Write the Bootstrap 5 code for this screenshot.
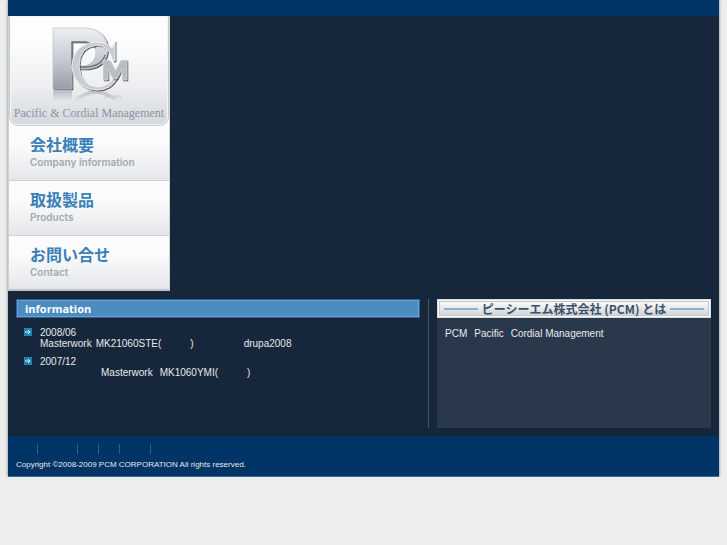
<!DOCTYPE html>
<html lang="ja">
<head>
<meta charset="utf-8">
<meta name="viewport" content="width=device-width, initial-scale=1">
<title>Pacific &amp; Cordial Management</title>
<link href="https://cdn.jsdelivr.net/npm/bootstrap@5.3.0/dist/css/bootstrap.min.css" rel="stylesheet">
<style>
body{background:#eceeed;font:10px/11px "Liberation Sans","Noto Sans CJK JP",sans-serif;color:#e6eaee}
.page-shell{margin:0 8px;background:#16263b;box-shadow:0 0 3px #777}
.top-strip{height:16px;background:#003366}
.side{width:162px;background:#fff;border:solid #d0d3d6;border-width:0 1px}
.brand-link{height:110px;border-radius:0 0 9px 9px;border:1px solid #c9ccd1;border-top:0;background:linear-gradient(#fdfdfd 25%,#eceef0 65%,#d3d7de);box-shadow:inset 0 0 0 1px #f4f5f6;text-decoration:none}
.brand-link svg{width:100%;height:108px}
.side-link{height:55px;padding:6px 0 0 21px;text-decoration:none;color:#a4a8ad;background:linear-gradient(#fcfcfc 30%,#e5e7ea);border-bottom:1px solid #cfd2d5}
.side-link:last-child{border-bottom:2px solid #bfc3c6}
.side-link strong{font:700 16px/24px "Noto Sans CJK JP",sans-serif;color:#3a80b8;height:24px}
.side-link small{font:600 10px/12px "Inter","Liberation Sans",sans-serif}
.info-title{height:19px;margin:0;padding-left:8px;background:#4b8dc1;border:1px solid #286199;box-shadow:inset 0 0 0 1px #73a1cb;font:700 11px/18px "Open Sans",sans-serif;color:#fff}
.info-col{flex:404 1 0}
.about-col{flex:274 1 0;background:#2a384b}
.rule{width:1px;background:#465568}
.about-title{height:19px;margin:0;padding:0 6px;background:linear-gradient(#fff,#ccd0d4);border:1px solid #d9dde1;box-shadow:inset 0 0 0 1px #f7f8f9,inset 0 0 0 2px #c4c8cc;font:700 12px/17px "Noto Sans CJK JP",sans-serif;color:#3c5168}
.about-title i{height:2px;background:#91acc8}
.lower{height:145px;padding:8px;gap:8px}
.news{padding:9px 0 0 8px}
.news li{display:flex;gap:8px;margin-bottom:7px}
.news svg{width:8px;height:8px;margin-top:1px;flex:none}
.foot{height:41px;padding:8px;background:#003366;border-bottom:1px solid #426c93;font-size:8px}
.foot-links{height:10px}
.foot-links span{border-right:1px solid #345d87}
.w21{width:22px}.w40{width:40px}.w20{width:21px}.w30{width:31px}
.g4{margin-left:4px}.g7{margin-left:7px}.g28{margin-left:29px}.g50{margin-left:50px}.g60{margin-left:61px}
.copy{padding-top:5px}
.about-text{padding:10px 8px}
</style>
<script defer src="https://cdn.jsdelivr.net/npm/bootstrap@5.3.0/dist/js/bootstrap.bundle.min.js"></script>
</head>
<body>
<div class="page-shell">
<header class="top-strip"></header>
<nav class="side d-flex flex-column">
<a href="#" class="brand-link d-block">
<svg viewBox="0 0 158 108" aria-label="Pacific &amp; Cordial Management">
<defs>
<linearGradient id="metal" x1="0" y1="0" x2="0" y2="1"><stop offset="0" stop-color="#eceef2"/><stop offset=".5" stop-color="#c8ccd4"/><stop offset="1" stop-color="#989da7"/></linearGradient>
<linearGradient id="fade" x1="0" y1="74" x2="0" y2="86" gradientUnits="userSpaceOnUse"><stop stop-color="#888c94" stop-opacity=".55"/><stop offset="1" stop-color="#aaa" stop-opacity="0"/></linearGradient>
<filter id="edge" x="-20%" y="-20%" width="150%" height="150%"><feDropShadow dx="1" dy="1" stdDeviation=".7" flood-color="#30343b" flood-opacity=".85"/></filter>
</defs>
<g fill="none" stroke="url(#fade)"><path d="M43 75h19v9H43z" fill="url(#fade)" stroke="none"/><path d="M64 86Q86 66 108 86" stroke-width="4"/><path d="M94 83q4-6 8 0q5-6 10 0" stroke-width="2"/></g>
<path filter="url(#edge)" fill="url(#metal)" stroke="#b5b9c1" stroke-width=".6" fill-rule="evenodd" d="M43 12H77Q97 14 98 33Q97 51 78 53H62V73H43ZM62 26V50H75Q86 47 86 36Q85 26 75 26Z"/>
<path d="M62 50V26H75Q83 27 85 32M62 51H76Q92 50 95 39" fill="none" stroke="#6c717a" stroke-width="1.3"/>
<path filter="url(#edge)" fill="#c8ccd3" stroke="#f8f9fa" stroke-width=".8" fill-rule="evenodd" d="M105 25V45H103Q99 29 87 29Q69 31 69 50Q70 70 88 71Q100 70 106 58L108 60Q102 74 87 74Q63 72 62 50Q63 28 86 26Q96 26 102 32Z"/>
<path filter="url(#edge)" fill="#b8bcc3" stroke="#eceef0" stroke-width=".5" d="M93 44H99L105 55L111 44H117V64H112V53L107 63H103L98 53V64H93Z"/>
<text x="79" y="101" text-anchor="middle" font-family="Liberation Serif,serif" font-size="12" fill="#8e939b">Pacific &amp; Cordial Management</text>
</svg></a>
<a href="#" class="side-link d-flex flex-column"><strong>会社概要</strong><small>Company information</small></a>
<a href="#" class="side-link d-flex flex-column"><strong>取扱製品</strong><small>Products</small></a>
<a href="#" class="side-link d-flex flex-column"><strong>お問い合せ</strong><small>Contact</small></a>
</nav>
<main class="lower d-flex">
<section class="info-col"><h1 class="info-title">information</h1>
<ul class="news list-unstyled m-0">
<li><svg viewBox="0 0 8 8"><path fill="#2382b0" d="M0 0h8v8H0z"/><path d="M1 4h5M4 2l2 2-2 2" fill="none" stroke="#e2f2fa"/></svg><div>2008/06<div class="text-nowrap">Masterwork<span class="g4">MK21060STE(</span><span class="g28">)</span><span class="g50">drupa2008</span></div></div></li>
<li><svg viewBox="0 0 8 8"><path fill="#2382b0" d="M0 0h8v8H0z"/><path d="M1 4h5M4 2l2 2-2 2" fill="none" stroke="#e2f2fa"/></svg><div>2007/12<div class="text-nowrap"><span class="g60">Masterwork</span><span class="g7">MK1060YMI(</span><span class="g28">)</span></div></div></li>
</ul></section>
<div class="rule"></div>
<section class="about-col"><h2 class="about-title d-flex align-items-center gap-1"><i class="flex-fill"></i><span>ピーシーエム株式会社 (PCM) とは</span><i class="flex-fill"></i></h2>
<p class="about-text m-0">PCM<span class="g7">Pacific</span><span class="g7">Cordial Management</span></p></section>
</main>
<footer class="foot"><div class="foot-links d-flex"><span class="w21"></span><span class="w40"></span><span class="w20"></span><span class="w20"></span><span class="w30"></span></div><div class="copy">Copyright ©2008-2009 PCM CORPORATION All rights reserved.</div></footer>
</div>
</body>
</html>
